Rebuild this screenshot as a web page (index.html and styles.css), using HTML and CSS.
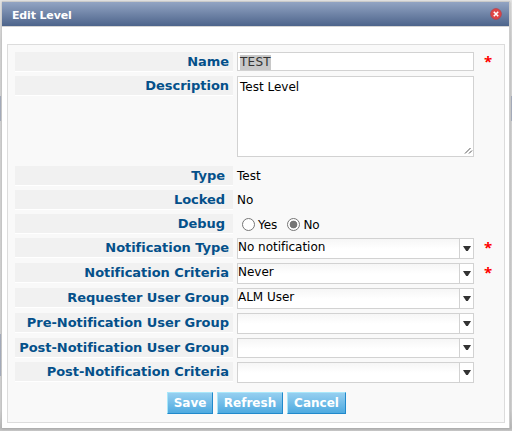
FILE: index.html
```html
<!DOCTYPE html>
<html lang="en">
<head>
<meta charset="utf-8">
<title>Edit Level</title>
<link rel="stylesheet" href="styles.css">
</head>
<body>
<div class="dialog">
  <div class="titlebar">
    <span class="title">Edit Level</span>
    <svg class="close" width="12" height="12" viewBox="0 0 12 12"><circle cx="6" cy="6" r="5.4" fill="#e04545" stroke="#b93d48" stroke-width=".7"/><path d="M3.800 3.800l4.400 4.400M8.200 3.800L3.800 8.200" stroke="#fff" stroke-width="1.600"/></svg>
  </div>
  <form class="panel">
    <div class="row"><div class="label">Name</div><div class="field"><span class="selected">TEST</span></div><span class="star">*</span></div>
    <div class="row row-area"><div class="label">Description</div><div class="field area">Test Level<svg class="grip" width="9" height="9" viewBox="0 0 9 9"><path d="M1 6.500L6.500 1M5 6.500L8 3.500" stroke="#555" stroke-width="1" fill="none"/></svg></div></div>
    <div class="row"><div class="label plain">Type</div><div class="value">Test</div></div>
    <div class="row"><div class="label plain">Locked</div><div class="value">No</div></div>
    <div class="row"><div class="label plain">Debug</div><div class="radios"><span class="radio"></span><span class="yes">Yes</span><span class="radio checked"></span><span>No</span></div></div>
    <div class="row tall"><div class="label">Notification Type</div><div class="combo"><span class="text">No notification</span><span class="arrow"></span></div><span class="star">*</span></div>
    <div class="row tall"><div class="label">Notification Criteria</div><div class="combo"><span class="text">Never</span><span class="arrow"></span></div><span class="star">*</span></div>
    <div class="row tall"><div class="label">Requester User Group</div><div class="combo"><span class="text">ALM User</span><span class="arrow"></span></div></div>
    <div class="row tall"><div class="label">Pre-Notification User Group</div><div class="combo"><span class="text"></span><span class="arrow"></span></div></div>
    <div class="row"><div class="label">Post-Notification User Group</div><div class="combo short"><span class="text"></span><span class="arrow"></span></div></div>
    <div class="row last"><div class="label">Post-Notification Criteria</div><div class="combo"><span class="text"></span><span class="arrow"></span></div></div>
    <div class="buttons"><div class="button save">Save</div><div class="button refresh">Refresh</div><div class="button cancel">Cancel</div></div>
  </form>
</div>
</body>
</html>
```
FILE: styles.css
```css
* { box-sizing: border-box; }
body {
  margin: 0;
  height: 431px;
  overflow: hidden;
  padding: 1px 2px 0;
  background:
    linear-gradient(#a3abbb, #a3abbb) 0 96px / 1px 25px no-repeat,
    linear-gradient(#a3abbb, #a3abbb) 0 334px / 1px 42px no-repeat,
    linear-gradient(#a3abbb, #a3abbb) 511px 96px / 1px 25px no-repeat,
    linear-gradient(#e4e4e4, #d2d2d2 40px, #d0d0d0 410px, #b8b8b8 428px, #c8c8c8);
  font: 12px "DejaVu Sans", Verdana, sans-serif;
  color: #000;
}
.dialog {
  width: 508px;
  height: 427px;
  background: #fff;
  border-top: 1px solid #c9c9c9;
  border-right: 1px solid #ccc;
  box-shadow: 0 1px 2px #aaa;
}
.titlebar {
  height: 25px;
  display: flex;
  align-items: center;
  justify-content: space-between;
  padding: 0 7px 0 10px;
  background: linear-gradient(#92a4c3, #4d648b);
  border-bottom: 1px solid #d4d4d4;
  color: #fff;
}
.title { padding-top: 2px; font-weight: bold; font-size: 11px; letter-spacing: -.15px; }
.panel {
  margin: 17px 5px 0;
  width: 498px;
  height: 379px;
  padding: 7px;
  border: 1px solid #dcdcdc;
  background: #f9f9f9;
}
.row {
  display: grid;
  grid-template-columns: 218px 237px 1fr;
  column-gap: 4px;
  align-items: start;
  height: 24px;
}
.row-area { height: 90px; }
.tall { height: 25px; }
.last { height: 30px; }
.label {
  height: 20px;
  padding-right: 4px;
  background: #f1f1f1;
  border-bottom: 1px solid #fff;
  color: #04508a;
  font-size: 13px;
  font-weight: bold;
  letter-spacing: -.04px;
  line-height: 19px;
  text-align: right;
  white-space: nowrap;
}
.plain { padding-right: 8px; }
.field {
  height: 19px;
  padding: 2px;
  border: 1px solid #d2d2d2;
  background: #fff;
  line-height: 15px;
}
.selected { display: inline-block; height: 15px; background: #c8c8c8; color: #333; letter-spacing: .25px; }
.area { height: 81px; position: relative; line-height: 16px; }
.grip { position: absolute; right: 0; bottom: 0; }
.star {
  padding-left: 6px;
  color: #f00;
  font-family: "Open Sans", Verdana, sans-serif;
  font-size: 15px;
  font-weight: bold;
  line-height: 18px;
}
.value { line-height: 20px; }
.radios { display: flex; align-items: center; height: 20px; padding-left: 5px; }
.radios span:not(.radio) { padding-top: 1px; }
.radio {
  width: 13px;
  height: 13px;
  margin-right: 3px;
  border: 1px solid #767676;
  border-radius: 50%;
  background: #fff;
}
.checked { background: radial-gradient(circle, #767676 0 3.5px, #fff 4.2px); }
.yes { margin-right: 10px; }
.combo {
  display: flex;
  height: 21px;
  border: 1px solid #d2d2d2;
  background: linear-gradient(#f6f6f6, #fff 10px);
}
.short { height: 20px; }
.text { flex: 1; line-height: 16px; letter-spacing: -.02px; }
.arrow { width: 14px; border-left: 1px solid #d2d2d2; background: #fff; }
.arrow::before {
  content: "";
  display: block;
  width: 8px;
  height: 5px;
  margin: 7px 0 0 3px;
  background: #333;
  clip-path: polygon(0 0, 100% 0, 60% 100%, 40% 100%);
}
.short .arrow::before { margin-top: 6px; }
.buttons { display: flex; gap: 4px; padding-left: 152px; }
.button {
  height: 22px;
  border: 1px solid;
  border-color: #a8e7fa #2189cb #2189cb #a8e7fa;
  background: linear-gradient(#96cff0, #4eaae0);
  color: #fff;
  font-weight: bold;
  line-height: 21px;
  text-align: center;
}
.save { width: 46px; }
.refresh { width: 66px; }
.cancel { width: 59px; }
```
